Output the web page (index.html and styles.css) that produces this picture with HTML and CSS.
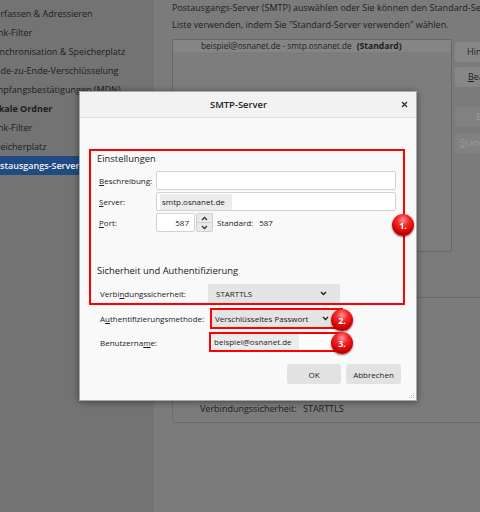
FILE: index.html
```html
<!DOCTYPE html>
<html lang="de">
<head>
<meta charset="utf-8">
<title>SMTP-Server</title>
<link rel="stylesheet" href="styles.css">
</head>
<body>
<div class="app">
  <nav class="sidebar">
    <div class="nav-item"><span>Verfassen &amp; Adressieren</span></div>
    <div class="nav-item"><span>Junk-Filter</span></div>
    <div class="nav-item"><span>Synchronisation &amp; Speicherplatz</span></div>
    <div class="nav-item"><span>Ende-zu-Ende-Verschlüsselung</span></div>
    <div class="nav-item"><span>Empfangsbestätigungen (MDN)</span></div>
    <div class="nav-item account"><span>Lokale Ordner</span></div>
    <div class="nav-item"><span>Junk-Filter</span></div>
    <div class="nav-item"><span>Speicherplatz</span></div>
    <div class="nav-item account selected"><span>Postausgangs-Server (SMTP)</span></div>
  </nav>
  <main class="panel">
    <p class="intro">Postausgangs-Server (SMTP) auswählen oder Sie können den Standard-Server aus der<br>Liste verwenden, indem Sie "Standard-Server verwenden" wählen.</p>
    <div class="servers">
      <div class="server-list">
        <div class="server-row">beispiel@osnanet.de - smtp.osnanet.de <b>(Standard)</b></div>
      </div>
      <div class="server-actions">
        <div class="bg-btn btn-add">Hinzufügen…</div>
        <div class="bg-btn btn-edit"><u>B</u>earbeiten…</div>
        <div class="bg-btn disabled btn-remove">Entfernen</div>
        <div class="bg-btn disabled btn-default"><u>S</u>tandard-Server verwenden</div>
      </div>
    </div>
    <div class="details">
      <div class="detail-row"><span class="detail-label">Verbindungssicherheit:</span><span>STARTTLS</span></div>
    </div>
  </main>
</div>

<div class="dialog">
  <div class="titlebar">
    <div class="title">SMTP-Server</div>
    <div class="close"><svg width="7" height="7" viewBox="0 0 7 7"><path d="M1 1L6 6M6 1L1 6" stroke="#2a2a2a" stroke-width="1.2" fill="none"/></svg></div>
  </div>
  <div class="dialog-body">
    <div class="box-settings">
      <div class="section-title">Einstellungen</div>
      <div class="field-grid">
        <label class="lbl"><u>B</u>eschreibung:</label>
        <div class="textbox"></div>
        <label class="lbl"><u>S</u>erver:</label>
        <div class="textbox"><span class="filled">smtp.osnanet.de</span></div>
        <label class="lbl"><u>P</u>ort:</label>
        <div class="port-row">
          <div class="textbox port">587</div>
          <div class="spinner">
            <div class="spin-half"><svg width="7" height="5" viewBox="0 0 7 5"><path d="M1 4L3.5 1.5L6 4" stroke="#333" stroke-width="1.3" fill="none"/></svg></div>
            <div class="spin-half"><svg width="7" height="5" viewBox="0 0 7 5"><path d="M1 1L3.5 3.5L6 1" stroke="#333" stroke-width="1.3" fill="none"/></svg></div>
          </div>
          <span class="std-label">Standard:</span>
          <span class="std-value">587</span>
        </div>
      </div>
      <div class="section-title second">Sicherheit und Authentifizierung</div>
      <div class="sec-row">
        <label class="lbl">Verbi<u>n</u>dungssicherheit:</label>
        <div class="select conn">STARTTLS<svg class="chev" width="7" height="5" viewBox="0 0 7 5"><path d="M1 1L3.5 3.5L6 1" stroke="#222" stroke-width="1.4" fill="none"/></svg></div>
      </div>
    </div>
    <div class="auth-row">
      <label class="lbl">A<u>u</u>thentifizierungsmethode:</label>
      <div class="highlight"><div class="select method">Verschlüsseltes Passwort<svg class="chev" width="7" height="5" viewBox="0 0 7 5"><path d="M1 1L3.5 3.5L6 1" stroke="#222" stroke-width="1.4" fill="none"/></svg></div></div>
    </div>
    <div class="auth-row user-row">
      <label class="lbl">Benutzerna<u>m</u>e:</label>
      <div class="highlight"><div class="textbox user"><span class="filled">beispiel@osnanet.de</span></div></div>
    </div>
    <div class="dialog-buttons">
      <button class="dlg-btn ok">OK</button>
      <button class="dlg-btn cancel">Abbrechen</button>
    </div>
  </div>
  <div class="badge b1">1.</div>
  <div class="badge b2">2.</div>
  <div class="badge b3">3.</div>
  <svg class="grip" width="7" height="7" viewBox="0 0 7 7"><g fill="#b8b8b8"><rect x="5" y="1" width="1" height="1"/><rect x="3" y="3" width="1" height="1"/><rect x="5" y="3" width="1" height="1"/><rect x="1" y="5" width="1" height="1"/><rect x="3" y="5" width="1" height="1"/><rect x="5" y="5" width="1" height="1"/></g></svg>
</div>
</body>
</html>
```

FILE: styles.css
```css
* { box-sizing: border-box; }
html, body { margin: 0; padding: 0; }
body {
  width: 480px;
  height: 512px;
  overflow: hidden;
  position: relative;
  background: #7b7b7b;
  font-family: "Open Sans", "Noto Sans", sans-serif;
  color: #1d1d1d;
}
.app { display: flex; height: 512px; }

/* sidebar */
.sidebar {
  width: 154px;
  flex: none;
  background: #737373;
  padding-top: 4px;
  overflow: hidden;
  font-size: 9px;
}
.nav-item {
  height: 19px;
  line-height: 19px;
  white-space: nowrap;
  overflow: hidden;
}
.nav-item span { display: block; margin-left: -10px; }
.nav-item.account span { margin-left: -12px; font-weight: 700; }
.nav-item.selected { background: #1f4a82; color: #f2f2f2; }
.nav-item.selected span { font-weight: 600; margin-left: -11px; }

/* main panel */
.panel {
  flex: 1;
  min-width: 0;
  overflow: hidden;
  padding-left: 18px;
  font-size: 9px;
}
.intro { margin: 0; line-height: 16.5px; white-space: nowrap; }
.servers { display: flex; margin-top: 6px; }
.server-list {
  flex: none;
  width: 280px;
  height: 213px;
  border: 1px solid #676767;
  border-radius: 2px;
  background: #7d7d7d;
}
.server-row {
  height: 12px;
  line-height: 12px;
  background: #858585;
  padding-left: 28px;
  font-size: 8.2px;
  white-space: nowrap;
}
.server-row b { margin-left: 3px; font-size: 8.6px; }
.server-actions {
  flex: none;
  width: 160px;
  margin-left: 3px;
  padding-top: 3px;
  display: flex;
  flex-direction: column;
}
.bg-btn {
  height: 20px;
  line-height: 20px;
  background: #878787;
  border-radius: 3px;
  white-space: nowrap;
}
.bg-btn.disabled { background: #818181; color: #9b9b9b; }
.btn-add { padding-left: 12px; }
.btn-edit { padding-left: 13px; margin-top: 5px; }
.btn-remove { padding-left: 21px; margin-top: 20px; }
.btn-default { padding-left: 5px; margin-top: 6px; }

.details {
  margin-top: 45px;
  width: 330px;
  height: 126px;
  border: 1px solid #6b6b6b;
  border-radius: 3px;
  display: flex;
  flex-direction: column;
  justify-content: flex-end;
  padding: 0 0 6px 27px;
}
.detail-row { display: flex; line-height: 14px; white-space: nowrap; }
.detail-label { width: 103px; }

/* dialog */
.dialog {
  position: absolute;
  left: 79px;
  top: 91px;
  width: 338px;
  height: 310px;
  background: #f9f9f9;
  border: 1px solid #a9a9a9;
  box-shadow: 0 1px 7px rgba(0, 0, 0, 0.45);
  font-size: 8px;
  color: #1b1b1b;
}
.titlebar {
  height: 26px;
  display: flex;
  align-items: center;
  background: #f2f2f2;
  border-bottom: 1px solid #dcdcdc;
}
.title {
  flex: 1;
  text-align: center;
  font-size: 9.4px;
  font-weight: 600;
  color: #222;
}
.close {
  width: 19px;
  padding-right: 5px;
  display: flex;
  justify-content: center;
  align-items: center;
}
.dialog-body { padding: 31px 11px 0 9px; }

.box-settings {
  height: 156px;
  border: 2px solid #ff0000;
  padding: 1px 7px 0 6px;
}
.section-title { font-size: 9.4px; line-height: 14px; color: #1a1a1a; }
.section-title.second { margin-top: 32px; }
.field-grid {
  margin-top: 5px;
  padding-left: 2px;
  display: grid;
  grid-template-columns: 57px 1fr;
  grid-auto-rows: 19px;
  row-gap: 2px;
  align-items: center;
}
.lbl { white-space: nowrap; }
.lbl u { text-decoration-thickness: 1px; text-underline-offset: 1px; }
.textbox {
  height: 19px;
  background: #fff;
  border: 1px solid #d2d2d2;
  border-radius: 2px;
  display: flex;
  align-items: center;
  padding-left: 3px;
  white-space: nowrap;
}
.filled { background: #ececec; padding: 2px 7px 2px 2px; line-height: 12px; }
.port-row { display: flex; align-items: center; height: 19px; }
.textbox.port { width: 39px; justify-content: flex-end; padding-right: 5px; }
.spinner {
  width: 17px;
  height: 19px;
  margin-left: 1px;
  border: 1px solid #d0d0d0;
  border-radius: 2px;
  background: #e9e9e9;
  display: flex;
  flex-direction: column;
}
.spin-half { flex: 1; display: flex; align-items: center; justify-content: center; }
.spin-half + .spin-half { border-top: 1px solid #d0d0d0; }
.std-label { margin-left: 4px; }
.std-value { margin-left: 6px; }

.sec-row {
  margin-top: 6px;
  margin-left: 3px;
  display: grid;
  grid-template-columns: 108px 132px;
  align-items: center;
}
.select {
  height: 19px;
  background: #e4e4e4;
  border-radius: 2px;
  display: flex;
  align-items: center;
  justify-content: space-between;
  padding: 0 13px 0 8px;
  white-space: nowrap;
}
.auth-row {
  margin-top: 3px;
  padding-left: 11px;
  display: grid;
  grid-template-columns: 110px 133px;
  align-items: center;
}
.user-row { margin-top: 3px; grid-template-columns: 109px 134px; }
.highlight { border: 2px solid #ff0000; height: 21px; }
.user-row .highlight { height: 20px; }
.select.method { height: 17px; padding: 0 12px 0 3px; }
.textbox.user { height: 16px; border: none; border-radius: 0; padding-left: 1px; }

.dialog-buttons {
  margin-top: 12px;
  padding-right: 4px;
  display: flex;
  justify-content: flex-end;
  gap: 5px;
}
.dlg-btn {
  height: 20px;
  border: none;
  border-radius: 3px;
  background: #e2e2e2;
  font-family: inherit;
  font-size: 8px;
  color: #1d1d1d;
  padding: 0;
}
.dlg-btn.ok { width: 54px; }
.dlg-btn.cancel { width: 55px; }

.badge {
  position: absolute;
  width: 22px;
  height: 22px;
  border-radius: 50%;
  background: radial-gradient(circle at 50% 28%, #ff9a9a 0%, #f52a2a 30%, #d40000 65%, #950000 100%);
  box-shadow: 0 1px 2px rgba(0, 0, 0, 0.55);
  color: #fff;
  font-size: 9px;
  font-weight: 700;
  display: flex;
  align-items: center;
  justify-content: center;
  text-shadow: 0 0 1px rgba(90, 0, 0, 0.6);
}
.b1 { left: 312px; top: 122px; }
.b2 { left: 251px; top: 217px; }
.b3 { left: 251px; top: 240px; }
.grip { position: absolute; right: 1px; bottom: 1px; }
```
